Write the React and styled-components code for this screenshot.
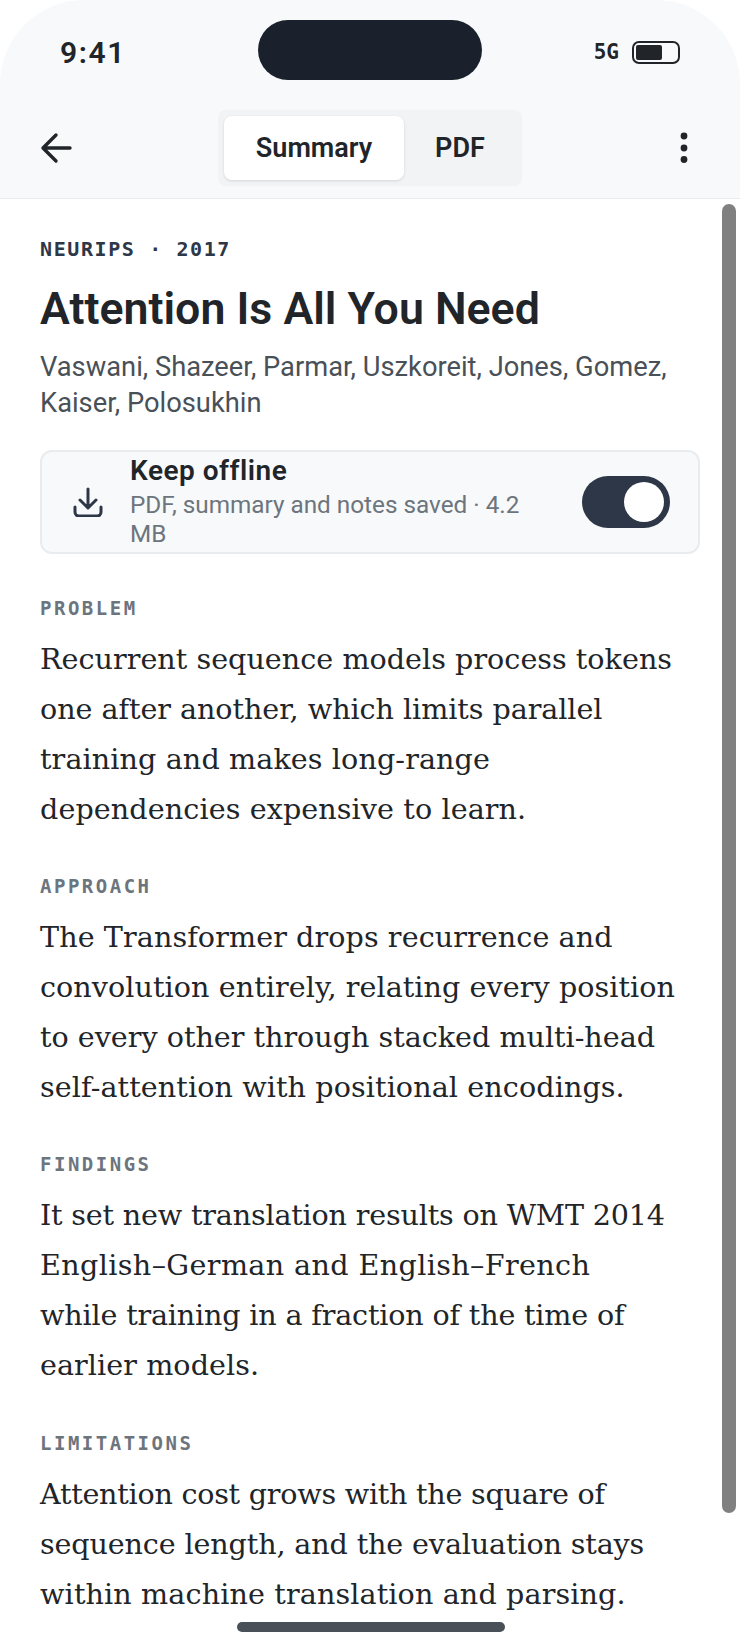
import styled, { createGlobalStyle } from 'styled-components';

const GlobalStyle = createGlobalStyle`
  html, body {
    margin: 0;
    padding: 0;
    background: #ffffff;
  }
`;

const SANS = '"Roboto", "Liberation Sans", sans-serif';
const SERIF = '"DejaVu Serif", "Liberation Serif", serif';
const MONO = '"DejaVu Sans Mono", "Liberation Mono", monospace';

const Phone = styled.div`
  position: relative;
  width: 740px;
  height: 1648px;
  overflow: hidden;
  background: #ffffff;
  border-radius: 84px 84px 0 0;
  font-family: ${SANS};
  color: #212529;
`;

const Header = styled.header`
  height: 199px;
  box-sizing: border-box;
  background: #f8f9fa;
  border-bottom: 1px solid #e9ecef;
`;

const StatusBar = styled.div`
  display: flex;
  align-items: center;
  justify-content: space-between;
  height: 56px;
  padding: 24px 60px 0 60px;
  position: relative;
`;

const Clock = styled.div`
  font-size: 30px;
  font-weight: 600;
  letter-spacing: 1.6px;
  color: #212529;
`;

const Island = styled.div`
  position: absolute;
  left: 258px;
  top: 20px;
  width: 224px;
  height: 60px;
  border-radius: 30px;
  background: #1a202c;
`;

const StatusRight = styled.div`
  display: flex;
  align-items: center;
  gap: 13px;
`;

const Network = styled.span`
  font-family: ${MONO};
  font-size: 21px;
  font-weight: 700;
`;

const Battery = styled.div`
  width: 48px;
  height: 23px;
  box-sizing: border-box;
  border: 2px solid #212529;
  border-radius: 7px;
  padding: 2px;
`;

const BatteryFill = styled.div`
  width: 26px;
  height: 100%;
  background: #212529;
  border-radius: 2px;
`;

const NavRow = styled.div`
  display: flex;
  align-items: center;
  justify-content: space-between;
  padding: 30px 40px 0 40px;
`;

const IconButton = styled.button`
  display: flex;
  align-items: center;
  justify-content: center;
  width: 32px;
  height: 40px;
  padding: 0;
  border: 0;
  background: none;
  color: #212529;
`;

const Tabs = styled.div`
  display: flex;
  padding: 6px;
  background: #f1f3f5;
  border-radius: 8px;
`;

const Tab = styled.div`
  display: flex;
  align-items: center;
  justify-content: center;
  width: ${(p) => p.$width}px;
  height: 64px;
  font-size: 27px;
  font-weight: 600;
  border-radius: 8px;
  background: ${(p) => (p.$active ? '#ffffff' : 'transparent')};
  box-shadow: ${(p) => (p.$active ? '0 1px 3px rgba(0, 0, 0, 0.12)' : 'none')};
`;

const Content = styled.main`
  padding: 37px 40px 0 40px;
`;

const Venue = styled.div`
  font-family: ${MONO};
  font-size: 20px;
  font-weight: 700;
  line-height: 26px;
  letter-spacing: 1.6px;
  color: #2d3748;
`;

const Title = styled.h1`
  margin: 19px 0 0;
  font-size: 44.7px;
  line-height: 56px;
  font-weight: 600;
  color: #212529;
`;

const Authors = styled.p`
  margin: 12px 0 0;
  font-size: 27.3px;
  line-height: 36px;
  color: #495057;
`;

const OfflineCard = styled.section`
  display: flex;
  align-items: center;
  box-sizing: border-box;
  height: 104px;
  margin-top: 29px;
  padding: 0 28px 0 31px;
  background: #f8f9fa;
  border: 2px solid #e9ecef;
  border-radius: 12px;
`;

const OfflineText = styled.div`
  flex: 1;
  margin-left: 27px;
  padding-bottom: 6px;
`;

const OfflineTitle = styled.div`
  font-size: 28px;
  line-height: 39px;
  font-weight: 600;
  letter-spacing: 0.5px;
`;

const OfflineMeta = styled.div`
  font-size: 24.3px;
  line-height: 29px;
  color: #6c757d;
`;

const Toggle = styled.div`
  display: flex;
  justify-content: flex-end;
  align-items: center;
  box-sizing: border-box;
  width: 88px;
  height: 52px;
  padding: 6px;
  border-radius: 26px;
  background: #2d3748;
`;

const ToggleKnob = styled.div`
  width: 40px;
  height: 40px;
  border-radius: 50%;
  background: #ffffff;
`;

const Section = styled.section`
  margin-top: ${(p) => p.$top}px;
`;

const SectionLabel = styled.div`
  font-family: ${MONO};
  font-size: 19px;
  font-weight: 700;
  line-height: 26px;
  letter-spacing: 2.5px;
  color: #6c757d;
`;

const Body = styled.p`
  margin: 13px 0 0;
  font-family: ${SERIF};
  font-size: 28.6px;
  line-height: 50px;
  color: #212529;
`;

const Line = styled.span`
  display: block;
  white-space: nowrap;
  letter-spacing: ${(p) => p.$track || 0}px;
`;

const Scrollbar = styled.div`
  position: absolute;
  left: 722px;
  top: 204px;
  width: 14px;
  height: 1309px;
  background: #808080;
  border-radius: 7px;
`;

const HomeIndicator = styled.div`
  position: absolute;
  left: 237px;
  top: 1622px;
  width: 268px;
  height: 10px;
  background: #495057;
  border-radius: 5px;
`;

const SECTIONS = [
  {
    label: 'PROBLEM',
    top: 41,
    lines: [
      ['Recurrent sequence models process tokens', 0.03],
      ['one after another, which limits parallel', -0.05],
      ['training and makes long-range', 0.11],
      ['dependencies expensive to learn.', 0.1],
    ],
  },
  {
    label: 'APPROACH',
    top: 39,
    lines: [
      ['The Transformer drops recurrence and', 0.09],
      ['convolution entirely, relating every position', 0.07],
      ['to every other through stacked multi-head', 0],
      ['self-attention with positional encodings.', 0.1],
    ],
  },
  {
    label: 'FINDINGS',
    top: 39,
    lines: [
      ['It set new translation results on WMT 2014', -0.175],
      ['English–German and English–French', 0.38],
      ['while training in a fraction of the time of', -0.17],
      ['earlier models.', 0.07],
    ],
  },
  {
    label: 'LIMITATIONS',
    top: 40,
    lines: [
      ['Attention cost grows with the square of', -0.24],
      ['sequence length, and the evaluation stays', -0.13],
      ['within machine translation and parsing.', 0.13],
    ],
  },
];

export default function App() {
  return (
    <>
      <GlobalStyle />
      <Phone>
        <Header>
          <StatusBar>
            <Clock>9:41</Clock>
            <Island />
            <StatusRight>
              <Network>5G</Network>
              <Battery>
                <BatteryFill />
              </Battery>
            </StatusRight>
          </StatusBar>
          <NavRow>
            <IconButton aria-label="Back">
              <svg width="32" height="32" viewBox="0 0 32 32" fill="none" stroke="currentColor" strokeWidth="3.4" strokeLinecap="round" strokeLinejoin="round">
                <path d="M30 16H3M16 3 3 16l13 13" />
              </svg>
            </IconButton>
            <Tabs>
              <Tab $active $width={180}>Summary</Tab>
              <Tab $width={112}>PDF</Tab>
            </Tabs>
            <IconButton aria-label="More">
              <svg width="8" height="32" viewBox="0 0 8 32" fill="currentColor">
                <circle cx="4" cy="4" r="3.4" />
                <circle cx="4" cy="16" r="3.4" />
                <circle cx="4" cy="27.5" r="3.4" />
              </svg>
            </IconButton>
          </NavRow>
        </Header>
        <Content>
          <Venue>NEURIPS · 2017</Venue>
          <Title>Attention Is All You Need</Title>
          <Authors>
            Vaswani, Shazeer, Parmar, Uszkoreit, Jones, Gomez,
            <br />
            Kaiser, Polosukhin
          </Authors>
          <OfflineCard>
            <svg width="30" height="30" viewBox="0 0 30 30" fill="none" stroke="#2d3748" strokeWidth="3" strokeLinecap="round" strokeLinejoin="round">
              <path d="M15 2v19M7 13l8 8 8-8M2 20v5a4 4 0 0 0 4 4h18a4 4 0 0 0 4-4v-5" />
            </svg>
            <OfflineText>
              <OfflineTitle>Keep offline</OfflineTitle>
              <OfflineMeta>
                PDF, summary and notes saved · 4.2
                <br />
                MB
              </OfflineMeta>
            </OfflineText>
            <Toggle>
              <ToggleKnob />
            </Toggle>
          </OfflineCard>
          {SECTIONS.map((section) => (
            <Section key={section.label} $top={section.top}>
              <SectionLabel>{section.label}</SectionLabel>
              <Body>
                {section.lines.map(([text, track]) => (
                  <Line key={text} $track={track}>{text}</Line>
                ))}
              </Body>
            </Section>
          ))}
        </Content>
        <Scrollbar />
        <HomeIndicator />
      </Phone>
    </>
  );
}
